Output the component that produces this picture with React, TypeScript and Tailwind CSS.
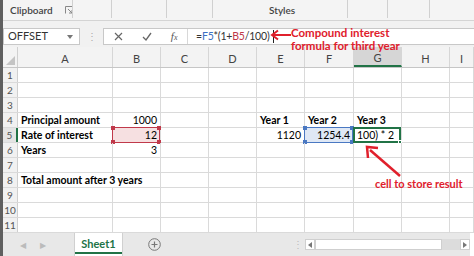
import React from 'react';

type Col = { key: string; w: string };
const COLS: Col[] = [
  { key: 'A', w: 'w-[95px]' },
  { key: 'B', w: 'w-[48px]' },
  { key: 'C', w: 'w-[48px]' },
  { key: 'D', w: 'w-[48px]' },
  { key: 'E', w: 'w-[48px]' },
  { key: 'F', w: 'w-[49px]' },
  { key: 'G', w: 'w-[48px]' },
  { key: 'H', w: 'w-[48px]' },
  { key: 'I', w: 'flex-1' },
];

type CellData = { text: string; bold?: boolean; right?: boolean };
const DATA: Record<string, CellData> = {
  A4: { text: 'Principal amount', bold: true },
  B4: { text: '1000', right: true },
  A5: { text: 'Rate of interest', bold: true },
  B5: { text: '12', right: true },
  A6: { text: 'Years', bold: true },
  B6: { text: '3', right: true },
  A8: { text: 'Total amount after 3 years', bold: true },
  E4: { text: 'Year 1', bold: true },
  F4: { text: 'Year 2', bold: true },
  G4: { text: 'Year 3', bold: true },
  E5: { text: '1120', right: true },
  F5: { text: '1254.4', right: true },
  G5: { text: '100) * 2' },
};

function Handles({ cls }: { cls: string }) {
  return (
    <>
      <div className={`absolute -left-[2px] -top-[2px] w-[4px] h-[4px] ${cls}`} />
      <div className={`absolute -right-[2px] -top-[2px] w-[4px] h-[4px] ${cls}`} />
      <div className={`absolute -left-[2px] -bottom-[2px] w-[4px] h-[4px] ${cls}`} />
      <div className={`absolute -right-[2px] -bottom-[2px] w-[4px] h-[4px] ${cls}`} />
    </>
  );
}

function Overlay({ id }: { id: string }) {
  if (id === 'B5')
    return (
      <div className="absolute -left-px -top-px right-0 -bottom-px border-[1.5px] border-[#c0394a] bg-[#f6e0e1]">
        <Handles cls="bg-[#c0394a]" />
      </div>
    );
  if (id === 'F5')
    return (
      <div className="absolute -left-px -top-px right-0 -bottom-px border-[1.5px] border-[#4a78c2] bg-[#dfe8f5]">
        <Handles cls="bg-[#4a78c2]" />
      </div>
    );
  if (id === 'G5')
    return (
      <div className="absolute -left-px -top-px right-0 -bottom-px border-2 border-[#217346]">
        <div className="absolute -right-[3px] -bottom-[3px] w-[4px] h-[4px] bg-[#217346] border border-white" />
      </div>
    );
  return null;
}

function Cell({ col, row }: { col: Col; row: number }) {
  const id = `${col.key}${row}`;
  const d = DATA[id];
  const noRight = id === 'A8';
  return (
    <div
      className={`relative h-full ${col.w} ${noRight ? '' : 'border-r border-[#dadada]'} flex items-center whitespace-nowrap`}
    >
      <Overlay id={id} />
      {d && (
        <span
          className={`relative z-10 w-full px-[3px] text-[10.5px] leading-none text-black ${d.bold ? 'font-bold' : ''} ${d.right ? 'text-right' : 'text-left'}`}
        >
          {d.text}
        </span>
      )}
    </div>
  );
}

function Row({ n }: { n: number }) {
  const active = n === 5;
  return (
    <div className="flex h-[15px] border-b border-[#dadada]">
      <div
        className={`w-[15px] shrink-0 h-full flex items-center justify-center text-[10px] text-[#555] ${active ? 'bg-[#e4e4e4] border-r-2 border-[#217346]' : 'bg-[#f1f1f1] border-r border-[#cfcfcf]'}`}
      >
        {n}
      </div>
      {COLS.map((c) => (
        <Cell key={c.key} col={c} row={n} />
      ))}
    </div>
  );
}

function HeaderRow() {
  return (
    <div className="flex h-[21px] border-b border-[#c6c6c6] bg-[#f3f3f3]">
      <div className="w-[15px] shrink-0 h-full border-r border-[#d0d0d0] flex items-end justify-end p-[2px]">
        <svg width="9" height="9" viewBox="0 0 9 9">
          <polygon points="9,0 9,9 0,9" fill="#c4c4c4" />
        </svg>
      </div>
      {COLS.map((c) => {
        const active = c.key === 'G';
        return (
          <div
            key={c.key}
            className={`${c.w} h-full flex items-center justify-center pt-[3px] text-[11px] leading-none text-[#444] border-r border-[#d6d6d6] ${active ? 'bg-[#d6d6d6] border-b-2 border-b-[#217346]' : ''}`}
          >
            {c.key}
          </div>
        );
      })}
    </div>
  );
}

export default function App() {
  return (
    <div className="relative w-[474px] h-[256px] overflow-hidden flex bg-white font-['Lato',sans-serif]">
      <div className="w-[3px] shrink-0 bg-[#5f5f5f]" />
      <div className="flex-1 flex flex-col min-w-0">
        {/* Ribbon strip */}
        <div className="relative h-[21px] shrink-0 bg-[#f4f4f4] border-b border-[#d4d4d4] flex items-center text-[10px] text-[#444]">
          <span className="ml-[7px] font-semibold">Clipboard</span>
          <svg className="ml-[12px]" width="8" height="8" viewBox="0 0 8 8">
            <path d="M0.5 7.5 V0.5 H7.5" fill="none" stroke="#888" strokeWidth="1" />
            <path d="M3 3 L7 7 M7 4 V7 H4" fill="none" stroke="#888" strokeWidth="1" />
          </svg>
          <div className="absolute left-[69px] top-0 h-[18px] w-px bg-[#d0d0d0]" />
          <div className="absolute left-[108px] top-0 h-[18px] w-px bg-[#d0d0d0]" />
          <div className="absolute left-[163px] top-0 h-[18px] w-px bg-[#d0d0d0]" />
          <div className="absolute left-[209px] top-0 h-[18px] w-px bg-[#d0d0d0]" />
          <span className="absolute left-[266px] font-semibold">Styles</span>
          <div className="absolute left-[344px] top-0 h-[18px] w-px bg-[#d0d0d0]" />
          <div className="absolute left-[384px] top-0 h-[18px] w-px bg-[#d0d0d0]" />
          <div className="absolute left-[426px] top-0 h-[18px] w-px bg-[#d0d0d0]" />
        </div>
        {/* Formula bar */}
        <div className="h-[26px] shrink-0 bg-[#f1f1f1] flex items-start pt-[7px]">
          <div className="w-[77px] h-[17px] bg-white border border-[#c8c8c8] flex items-center justify-between pl-[4px] pr-[6px] text-[11px] text-[#333]">
            <span>OFFSET</span>
            <svg width="6" height="4" viewBox="0 0 6 4">
              <polygon points="0,0 6,0 3,4" fill="#777" />
            </svg>
          </div>
          <div className="w-[23px] h-[17px] flex items-center justify-center text-[#aaa] text-[10px]">⋮</div>
          <div className="flex-1 h-[17px] bg-white border-y border-l border-[#c8c8c8] flex items-center">
            <div className="w-[84px] h-full flex items-center justify-around border-r border-[#d8d8d8] my-[2px]">
              <svg width="9" height="9" viewBox="0 0 9 9">
                <path d="M1 1 L8 8 M8 1 L1 8" stroke="#666" strokeWidth="1.2" />
              </svg>
              <svg width="10" height="9" viewBox="0 0 10 9">
                <path d="M1 5 L4 8 L9 1" fill="none" stroke="#666" strokeWidth="1.3" />
              </svg>
              <span className="font-['Liberation_Serif',serif] italic text-[11px] text-[#555]">
                f<span className="text-[8px]">x</span>
              </span>
            </div>
            <div className="relative pl-[8px] text-[10.5px] tracking-[-0.2px] text-[#333] whitespace-nowrap flex items-center">
              <span>=</span>
              <span className="text-[#3b6fc4]">F5</span>
              <span>*(1+</span>
              <span className="text-[#c0394a]">B5</span>
              <span>/100)</span>
              <span className="ml-[3px] inline-block w-[1.5px] h-[13px] bg-[#222]" />
            </div>
          </div>
        </div>
        <HeaderRow />
        {[1, 2, 3, 4, 5, 6, 7, 8, 9, 10, 11].map((n) => (
          <Row key={n} n={n} />
        ))}
        {/* Tab bar */}
        <div className="flex-1 flex items-stretch bg-[#e8e8e8] text-[#bbb]">
          <div className="w-[71px] flex items-center gap-[14px] pl-[17px] text-[8px]">
            <span>◀</span>
            <span>▶</span>
          </div>
          <div className="w-[49px] bg-white border-x border-[#d0d0d0] flex flex-col items-center justify-center relative">
            <span className="text-[11px] font-bold text-[#217346] -mt-[1px]">Sheet1</span>
            <div className="absolute left-0 right-0 bottom-[2px] h-[2px] bg-[#217346]" />
          </div>
          <div className="w-[62px] flex items-center justify-center">
            <svg width="13" height="13" viewBox="0 0 13 13">
              <circle cx="6.5" cy="6.5" r="5.8" fill="none" stroke="#777" strokeWidth="1" />
              <path d="M6.5 3.5 V9.5 M3.5 6.5 H9.5" stroke="#777" strokeWidth="1.2" />
            </svg>
          </div>
          <div className="flex-1" />
          <div className="w-[14px] flex items-center justify-center text-[#bbb] text-[10px]">⋮</div>
          <div className="w-[165px] flex items-center">
            <div className="flex-1 h-[11px] flex bg-[#dcdcdc]">
              <div className="w-[10px] h-full bg-white border border-[#cfcfcf] flex items-center justify-center">
                <svg width="4" height="6" viewBox="0 0 4 6">
                  <polygon points="4,0 4,6 0,3" fill="#777" />
                </svg>
              </div>
              <div className="w-[127px] h-full bg-white border border-[#cfcfcf]" />
              <div className="flex-1" />
              <div className="w-[10px] h-full bg-white border border-[#cfcfcf] flex items-center justify-center">
                <svg width="4" height="6" viewBox="0 0 4 6">
                  <polygon points="0,0 0,6 4,3" fill="#777" />
                </svg>
              </div>
            </div>
          </div>
          <div className="w-[4px] bg-white" />
        </div>
      </div>

      {/* Annotations */}
      <div className="absolute left-[291px] top-[26px] text-[11.5px] leading-[13px] font-bold text-[#e0202c] whitespace-nowrap">
        <div>Compound interest</div>
        <div>formula for third year</div>
      </div>
      <svg className="absolute left-[270px] top-[29px]" width="22" height="12" viewBox="0 0 22 12">
        <path d="M21 6 H4" stroke="#e0202c" strokeWidth="2" />
        <path d="M8 1.5 L2 6 L8 10.5" fill="none" stroke="#e0202c" strokeWidth="2" />
      </svg>
      <svg className="absolute left-[362px] top-[143px]" width="42" height="36" viewBox="0 0 42 36">
        <path d="M38 33 L8 7" stroke="#e0202c" strokeWidth="2.5" />
        <path d="M6 15 L5 4 L16 5" fill="none" stroke="#e0202c" strokeWidth="2.5" />
      </svg>
      <div className="absolute left-[375px] top-[177px] text-[11px] leading-[14px] font-bold text-[#e0202c] whitespace-nowrap">
        cell to store result
      </div>
    </div>
  );
}
